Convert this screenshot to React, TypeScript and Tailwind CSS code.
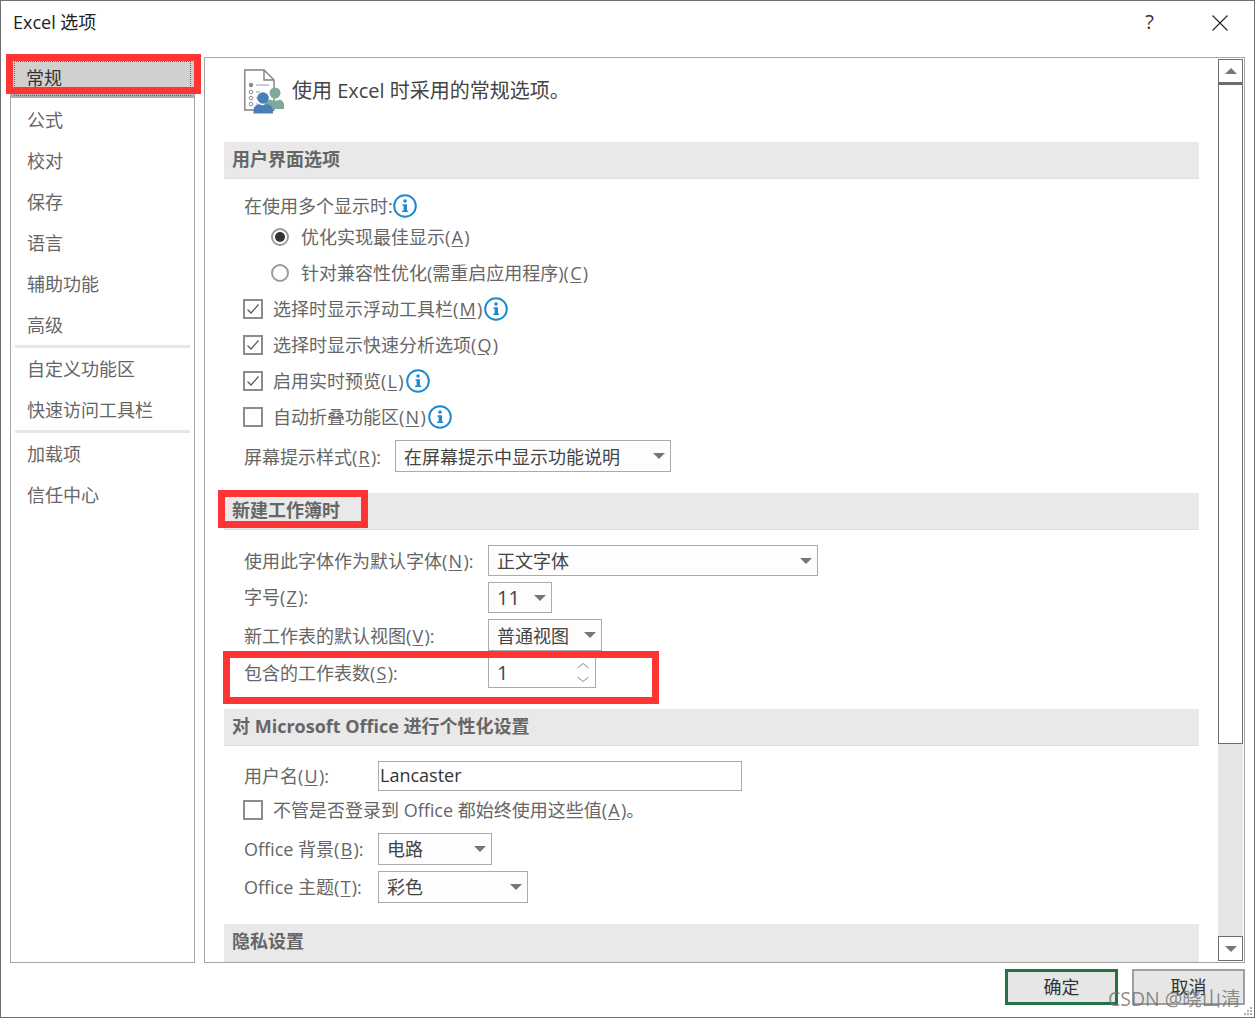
import type { ReactNode } from 'react';

const sideGroups = [
  ['公式', '校对', '保存', '语言', '辅助功能', '高级'],
  ['自定义功能区', '快速访问工具栏'],
  ['加载项', '信任中心'],
];

function Arrow({ up = false }: { up?: boolean }) {
  return (
    <svg width="12" height="8" viewBox="0 0 12 8" className="shrink-0">
      <path d={up ? 'M6 1 L12 7 L0 7 Z' : 'M0 1 L12 1 L6 7 Z'} fill="#777777" />
    </svg>
  );
}

function Info() {
  return (
    <svg width="24" height="24" viewBox="0 0 24 24" className="shrink-0">
      <circle cx="12" cy="12" r="10.8" fill="#fff" stroke="#1e8ad0" strokeWidth="2" />
      <circle cx="12" cy="7" r="1.8" fill="#1e8ad0" />
      <path d="M9.5 10.2 H14 V16.4 H15.2 V18 H9.2 V16.4 H10.6 V11.8 H9.5 Z" fill="#1e8ad0" />
    </svg>
  );
}

function Check({ checked = false }: { checked?: boolean }) {
  return (
    <span className="-ml-px w-[20px] h-[20px] shrink-0 border-2 border-[#8c8c8c] bg-white flex items-center justify-center">
      {checked && (
        <svg width="14" height="12" viewBox="0 0 14 12">
          <path d="M1.5 6.5 L5 10 L12.5 1.5" fill="none" stroke="#555" strokeWidth="1.2" />
        </svg>
      )}
    </span>
  );
}

function Radio({ checked = false }: { checked?: boolean }) {
  return (
    <span className="w-[18px] h-[18px] shrink-0 rounded-full border-2 border-[#9a9a9a] bg-white flex items-center justify-center">
      {checked && <span className="w-[10px] h-[10px] rounded-full bg-[#333]" />}
    </span>
  );
}

function Combo({ text, className, textClass = '' }: { text: string; className: string; textClass?: string }) {
  return (
    <div className={`flex items-center justify-between pl-[8px] pr-[5px] border border-[#ababab] bg-[#fdfdfd] text-[#444] ${className}`}>
      <span className={textClass}>{text}</span>
      <Arrow />
    </div>
  );
}

function Section({ title, className = '' }: { title: string; className?: string }) {
  return (
    <div className={`h-[37px] shrink-0 pl-[8px] pb-[2px] flex items-center bg-[#e9e9e9] border-b border-[#e0e0e0] font-bold text-[#666] ${className}`}>
      {title}
    </div>
  );
}

function U({ children }: { children: ReactNode }) {
  return <span className="mx-[1.25px] underline underline-offset-2">{children}</span>;
}

function DocIcon() {
  return (
    <svg width="40" height="45" viewBox="0 0 40 45" className="shrink-0">
      <path d="M0.8 1 H20 L30 11 V41 H0.8 Z" fill="#fff" stroke="#808080" strokeWidth="1.4" />
      <path d="M20 1 V11 H30" fill="none" stroke="#808080" strokeWidth="1.4" />
      <circle cx="7" cy="16" r="2.2" fill="#8c8c8c" />
      <circle cx="7" cy="23" r="1.8" fill="none" stroke="#8c8c8c" />
      <circle cx="7" cy="29" r="1.8" fill="none" stroke="#8c8c8c" />
      <circle cx="7" cy="35" r="1.8" fill="none" stroke="#8c8c8c" />
      <path d="M12 16 H25 M12 23 H16 M12 29 H14 M12 35 H14" stroke="#a0a0a0" strokeWidth="1.2" />
      <circle cx="31" cy="24" r="5.5" fill="#7fa99b" />
      <path d="M20 40 V36 Q21 32 26 30.5 Q31 33 36 30.5 Q40 32 40 36 V40 Z" fill="#7fa99b" />
      <circle cx="19" cy="29" r="5.8" fill="#4a7ebb" />
      <path d="M9.5 44.5 V40.5 Q10 36.5 15 35 Q19 37.5 23 35 Q28.5 36.5 29 40.5 V44.5 Z" fill="#4a7ebb" />
    </svg>
  );
}

function Grip() {
  const dots = [[6, 0], [3, 3], [6, 3], [0, 6], [3, 6], [6, 6]];
  return (
    <svg width="8" height="8" viewBox="0 0 8 8" className="absolute right-[2px] bottom-[2px]">
      {dots.map(([x, y]) => (
        <rect key={`${x}-${y}`} x={x} y={y} width="2" height="2" fill="#b0b0b0" />
      ))}
    </svg>
  );
}

export default function App() {
  return (
    <div className="relative w-[1255px] h-[1018px] flex flex-col overflow-hidden border border-[#707070] bg-white text-[18px] text-[#666] font-['Open_Sans','Noto_Sans_CJK_SC',sans-serif]">
      {/* title bar */}
      <div className="h-[56px] shrink-0 flex items-start justify-between">
        <span className="mt-[8px] ml-[12px] leading-[26px] text-[#222]">Excel 选项</span>
        <div className="flex items-start">
          <span className="mt-[7px] text-[20px] leading-[28px] text-[#333]">?</span>
          <svg width="16" height="16" viewBox="0 0 16 16" className="mt-[14px] ml-[58px] mr-[26px]">
            <path d="M0.5 0.5 L15.5 15.5 M15.5 0.5 L0.5 15.5" stroke="#222" strokeWidth="1.1" />
          </svg>
        </div>
      </div>

      <div className="h-[906px] shrink-0 flex gap-[9px] px-[9px]">
        {/* left nav */}
        <div className="w-[185px] shrink-0 border border-[#a6a6a6]">
          <div className="relative h-[41px] pt-[3px]">
            <div className="h-[32px] pt-[2px] pl-[15px] flex items-center bg-[#d2d0ce] text-[#333]">常规</div>
            <div className="h-[5px] bg-[#adadad]" />
            <div className="absolute left-[3px] right-[3px] top-[3px] h-[35px] border border-dotted border-[#666]" />
          </div>
          {sideGroups.map((group, i) => (
            <div key={i}>
              {i > 0 && <div className="h-[3px] mx-[4px] bg-[#e6e6e6]" />}
              {group.map(item => (
                <div key={item} className="h-[41px] pt-[2px] pl-[16px] flex items-center">
                  {item}
                </div>
              ))}
            </div>
          ))}
        </div>

        {/* right panel */}
        <div className="w-[1041px] shrink-0 flex border border-[#a6a6a6]">
          <div className="flex-1 min-w-0 pl-[19px] pr-[19px] flex flex-col overflow-hidden">
            <div className="h-[84px] shrink-0 pl-[20px] pt-[11px] flex items-start gap-[8px]">
              <DocIcon />
              <span className="text-[20px] leading-[44px] text-[#444]">使用 Excel 时采用的常规选项。</span>
            </div>

            <Section title="用户界面选项" />
            <div className="pl-[20px]">
              <div className="mt-[14px] h-[26px] flex items-center">
                在使用多个显示时:
                <Info />
              </div>
              <div className="h-[36px] pl-[27px] flex items-center gap-[12px]">
                <Radio checked />
                <span>优化实现最佳显示(<U>A</U>)</span>
              </div>
              <div className="h-[36px] pl-[27px] flex items-center gap-[12px]">
                <Radio />
                <span>针对兼容性优化(需重启应用程序)(<U>C</U>)</span>
              </div>
              <div className="h-[36px] flex items-center gap-[10px]">
                <Check checked />
                <span>选择时显示浮动工具栏(<U>M</U>)</span>
                <span className="-ml-[8px]"><Info /></span>
              </div>
              <div className="h-[36px] flex items-center gap-[10px]">
                <Check checked />
                <span>选择时显示快速分析选项(<U>Q</U>)</span>
              </div>
              <div className="h-[36px] flex items-center gap-[10px]">
                <Check checked />
                <span>启用实时预览(<U>L</U>)</span>
                <span className="-ml-[8px]"><Info /></span>
              </div>
              <div className="h-[36px] flex items-center gap-[10px]">
                <Check />
                <span>自动折叠功能区(<U>N</U>)</span>
                <span className="-ml-[8px]"><Info /></span>
              </div>
              <div className="mt-[5px] flex items-center">
                <span className="w-[151px] shrink-0 pt-[2px]">屏幕提示样式(<U>R</U>):</span>
                <Combo text="在屏幕提示中显示功能说明" textClass="pt-[2px]" className="w-[276px] h-[32px]" />
              </div>
            </div>

            <Section title="新建工作簿时" className="mt-[21px]" />
            <div className="pl-[20px]">
              <div className="mt-[15px] flex items-center">
                <span className="w-[244px] shrink-0 pt-[2px]">使用此字体作为默认字体(<U>N</U>):</span>
                <Combo text="正文字体" textClass="pt-[2px]" className="w-[330px] h-[31px]" />
              </div>
              <div className="mt-[6px] flex items-center">
                <span className="w-[244px] shrink-0">字号(<U>Z</U>):</span>
                <Combo text="11" textClass="text-[20px]" className="w-[64px] h-[31px]" />
              </div>
              <div className="mt-[6px] flex items-center">
                <span className="w-[244px] shrink-0 pt-[2px]">新工作表的默认视图(<U>V</U>):</span>
                <Combo text="普通视图" textClass="pt-[2px]" className="w-[114px] h-[32px]" />
              </div>
              <div className="mt-[6px] flex items-center">
                <span className="w-[244px] shrink-0 pt-[2px]">包含的工作表数(<U>S</U>):</span>
                <div className="w-[108px] h-[31px] pl-[8px] pr-[6px] flex items-center justify-between border border-[#ababab] bg-white text-[20px] text-[#444]">
                  <span>1</span>
                  <svg width="12" height="20" viewBox="0 0 12 20">
                    <path d="M0.5 5 L6 0.5 L11.5 5 M0.5 14 L6 18.5 L11.5 14" fill="none" stroke="#888" />
                  </svg>
                </div>
              </div>
            </div>

            <Section title="对 Microsoft Office 进行个性化设置" className="mt-[21px]" />
            <div className="pl-[20px]">
              <div className="mt-[15px] flex items-center">
                <span className="w-[134px] shrink-0">用户名(<U>U</U>):</span>
                <div className="w-[364px] h-[30px] pl-[1px] pb-[2px] flex items-center border border-[#ababab] text-[#333]">Lancaster</div>
              </div>
              <div className="mt-[4px] h-[30px] flex items-center gap-[10px]">
                <Check />
                <span>不管是否登录到 Office 都始终使用这些值(<U>A</U>)。</span>
              </div>
              <div className="mt-[8px] flex items-center">
                <span className="w-[134px] shrink-0">Office 背景(<U>B</U>):</span>
                <Combo text="电路" className="w-[114px] h-[32px]" />
              </div>
              <div className="mt-[6px] flex items-center">
                <span className="w-[134px] shrink-0">Office 主题(<U>T</U>):</span>
                <Combo text="彩色" className="w-[150px] h-[32px]" />
              </div>
            </div>

            <Section title="隐私设置" className="mt-[21px] h-[38px]" />
          </div>

          {/* scrollbar */}
          <div className="w-[25px] mr-[1px] my-[1px] shrink-0 flex flex-col bg-[#e6e6e6]">
            <div className="h-[26px] shrink-0 flex items-center justify-center border border-b-[3px] border-[#6d6d6d] bg-white">
              <Arrow up />
            </div>
            <div className="h-[659px] shrink-0 border border-t-0 border-[#6d6d6d] bg-white" />
            <div className="flex-1" />
            <div className="h-[25px] shrink-0 flex items-center justify-center border border-[#6d6d6d] bg-white">
              <Arrow />
            </div>
          </div>
        </div>
      </div>

      {/* footer */}
      <div className="pt-[6px] pr-[9px] flex justify-end gap-[14px] text-[#333]">
        <button className="w-[113px] h-[36px] border-[3px] border-[#217346] bg-[#e6e6e6]">确定</button>
        <button className="w-[113px] h-[36px] border-2 border-[#a0a0a0] bg-[#e6e6e6]">取消</button>
      </div>
      <Grip />

      {/* red annotations + watermark */}
      <div className="absolute left-[5px] top-[53px] w-[195px] h-[40px] border-[7px] border-[#ff3535]" />
      <div className="absolute left-[217px] top-[489px] w-[150px] h-[38px] border-[7px] border-[#ff3535]" />
      <div className="absolute left-[222px] top-[650px] w-[436px] h-[53px] border-[7px] border-[#ff3535]" />
      <span className="absolute left-[1107px] top-[985px] leading-[26px] text-[19.5px] text-[#707070]/80">CSDN @晓山清</span>
    </div>
  );
}
